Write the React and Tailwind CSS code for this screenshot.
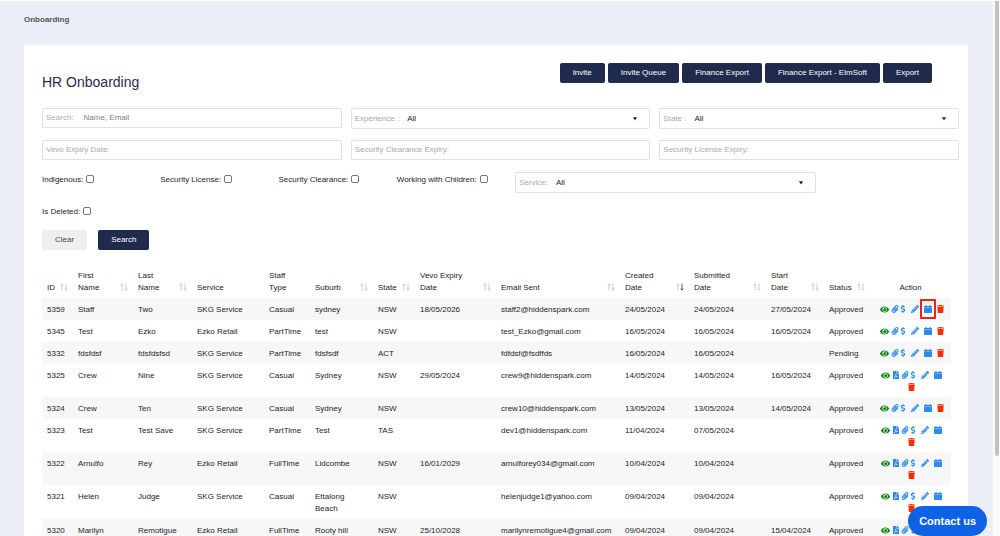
import { Fragment } from "react";
import {
	FaDollarSign,
	FaEye,
	FaFilePdf,
	FaPaperclip,
	FaPencilAlt,
} from "react-icons/fa";

const columns = [
	{ label: ["ID"], width: "w-[31px]", sort: true },
	{ label: ["First", "Name"], width: "w-[60px]", sort: true },
	{ label: ["Last", "Name"], width: "w-[59px]", sort: true },
	{ label: ["Service"], width: "w-[72px]" },
	{ label: ["Staff", "Type"], width: "w-[46px]" },
	{ label: ["Suburb"], width: "w-[63px]", sort: true },
	{ label: ["State"], width: "w-[42px]", sort: true },
	{ label: ["Vevo Expiry", "Date"], width: "w-[81px]", sort: true },
	{ label: ["Email Sent"], width: "w-[124px]", sort: true },
	{ label: ["Created", "Date"], width: "w-[69px]", sort: true, desc: true },
	{ label: ["Submitted", "Date"], width: "w-[77px]", sort: true },
	{ label: ["Start", "Date"], width: "w-[58px]", sort: true },
	{ label: ["Status"], width: "w-[46px]", sort: true },
	{ label: ["Action"], width: "w-[81px]", center: true },
];

const rows = [
	{ cells: ["5359", "Staff", "Two", "SKG Service", "Casual", "sydney", "NSW", "18/05/2026", "staff2@hiddenspark.com", "24/05/2024", "24/05/2024", "27/05/2024", "Approved"], marked: true },
	{ cells: ["5345", "Test", "Ezko", "Ezko Retail", "PartTime", "test", "NSW", "", "test_Ezko@gmail.com", "16/05/2024", "16/05/2024", "16/05/2024", "Approved"] },
	{ cells: ["5332", "fdsfdsf", "fdsfdsfsd", "SKG Service", "PartTime", "fdsfsdf", "ACT", "", "fdfdsf@fsdffds", "16/05/2024", "16/05/2024", "", "Pending"] },
	{ cells: ["5325", "Crew", "Nine", "SKG Service", "Casual", "Sydney", "NSW", "29/05/2024", "crew9@hiddenspark.com", "14/05/2024", "14/05/2024", "16/05/2024", "Approved"], pdf: true },
	{ cells: ["5324", "Crew", "Ten", "SKG Service", "Casual", "Sydney", "NSW", "", "crew10@hiddenspark.com", "13/05/2024", "13/05/2024", "14/05/2024", "Approved"] },
	{ cells: ["5323", "Test", "Test Save", "SKG Service", "PartTime", "Test", "TAS", "", "dev1@hiddenspark.com", "11/04/2024", "07/05/2024", "", "Approved"], pdf: true },
	{ cells: ["5322", "Arnulfo", "Rey", "Ezko Retail", "FullTime", "Lidcombe", "NSW", "16/01/2029", "arnulforey034@gmail.com", "10/04/2024", "10/04/2024", "", "Approved"], pdf: true },
	{ cells: ["5321", "Helen", "Judge", "SKG Service", "Casual", "Ettalong Beach", "NSW", "", "helenjudge1@yahoo.com", "09/04/2024", "09/04/2024", "", "Approved"], pdf: true },
	{ cells: ["5320", "Marilyn", "Remotigue", "Ezko Retail", "FullTime", "Rooty hill", "NSW", "25/10/2028", "marilynremotigue4@gmail.com", "09/04/2024", "09/04/2024", "15/04/2024", "Approved"], pdf: true },
];

function PrimaryButton({ children }) {
	return (
		<button type="button" className="h-5 rounded-xs bg-[#1f2a4d] px-[13px] font-medium text-white">
			{children}
		</button>
	);
}

function TextField({ id, label, placeholder }) {
	return (
		<div className="flex h-5 items-center rounded-xs border border-[#dfe1e6] px-[3px]">
			<label htmlFor={id} className="shrink-0 text-[#a9a9ad]">{label}</label>
			<input id={id} type="text" placeholder={placeholder} className="ml-[10px] min-w-0 flex-1 outline-none placeholder:text-[#808085]" />
		</div>
	);
}

function SelectField({ id, label }) {
	return (
		<div className="flex h-[21px] items-center rounded-xs border border-[#dfe1e6] pr-3 pl-[3px]">
			<label htmlFor={id} className="shrink-0 text-[#a9a9ad]">{label}</label>
			<select id={id} className="ml-2 min-w-0 flex-1 appearance-none bg-transparent outline-none">
				<option>All</option>
			</select>
			<svg viewBox="0 0 4 4" className="size-1 shrink-0" aria-hidden="true">
				<path d="M0 0.3h4L2 3.6z" fill="#222" />
			</svg>
		</div>
	);
}

function CheckField({ id, label }) {
	return (
		<div className="flex h-[15px] items-center gap-[3px]">
			<label htmlFor={id}>{label}</label>
			<input id={id} type="checkbox" className="mb-[2px] size-2 appearance-none rounded-[2px] border border-[#767676] bg-white checked:bg-[#1f2a4d]" />
		</div>
	);
}

function SortArrows({ desc }) {
	return (
		<svg viewBox="0 0 8 8" className="mb-[3px] size-2 shrink-0" fill="none" strokeWidth="0.8" aria-hidden="true">
			<path d="M2 7.5V1M0.7 2.4L2 0.8l1.3 1.6" stroke="#bfbfbf" />
			<path d="M6 0.5V7M4.7 5.6L6 7.2l1.3-1.6" stroke={desc ? "#333" : "#bfbfbf"} />
		</svg>
	);
}

function CalendarIcon() {
	return (
		<svg viewBox="0 0 8 8" className="size-2" fill="currentColor" aria-hidden="true">
			<path d="M1.4 0h1.2v1h2.8V0h1.2v1H8v6.3q0 .7-.7.7H.7Q0 8 0 7.3V1h1.4z" />
			<path d="M0 2.4h8v.6H0z" fill="#fff" fillOpacity="0.5" />
		</svg>
	);
}

function TrashIcon() {
	return (
		<svg viewBox="0 0 7 8" className="h-2 w-[7px]" fill="currentColor" aria-hidden="true">
			<path d="M2.3 0h2.4l.3.5h2v1.1H0V.5h2z" />
			<path d="M.4 2h6.2l-.4 5.4q-.1.6-.7.6h-4q-.6 0-.7-.6z" />
		</svg>
	);
}

function Action({ label, className, children }) {
	return (
		<button type="button" aria-label={label} className={className}>
			{children}
		</button>
	);
}

function Actions({ pdf, marked }) {
	const trash = (
		<Action label="Delete" className="text-[#fb2c08]"><TrashIcon /></Action>
	);

	return (
		<div className="text-[#2b8ceb]">
			<div className="flex h-3 items-center justify-center pl-[2px]">
				<Action label="View" className="mr-[2px] text-[#078207]"><FaEye className="size-[9px]" /></Action>
				{pdf && <Action label="PDF" className="mr-px"><FaFilePdf className="size-2" /></Action>}
				<Action label="Attachments"><FaPaperclip className="size-2" /></Action>
				<Action label="Payment" className="mr-1"><FaDollarSign className="size-2" /></Action>
				<Action label="Edit" className="mr-[5px]"><FaPencilAlt className="size-2" /></Action>
				<div className="relative flex">
					<Action label="Calendar"><CalendarIcon /></Action>
					{marked && <span className="pointer-events-none absolute -inset-x-1 -inset-y-[6px] border-2 border-[#f5230c]" />}
				</div>
				{!pdf && <div className="ml-[5px] flex">{trash}</div>}
			</div>
			{pdf && <div className="flex h-[11px] items-center justify-center pl-[2px]">{trash}</div>}
		</div>
	);
}

function App() {
	return (
		<div className="flex h-screen overflow-hidden border-t border-white bg-[#ebeef6] font-['Liberation_Sans',Arial,sans-serif] text-[8px] leading-3 text-[#212529]">
			<main className="min-w-0 flex-1 pr-[25px] pl-6">
				<nav className="pt-[13px] pb-[19px] font-bold text-[#555]">Onboarding</nav>
				<section className="bg-white pt-[18px] pr-[9px] pl-[18px]">
					<header className="flex items-start justify-between pr-[27px]">
						<h1 className="pt-[9px] text-[14px] leading-5 text-[#1f2a4d]">HR Onboarding</h1>
						<div className="flex gap-[3px]">
							<PrimaryButton>Invite</PrimaryButton>
							<PrimaryButton>Invite Queue</PrimaryButton>
							<PrimaryButton>Finance Export</PrimaryButton>
							<PrimaryButton>Finance Export - ElmSoft</PrimaryButton>
							<PrimaryButton>Export</PrimaryButton>
						</div>
					</header>
					<form>
						<div className="mt-4 grid grid-cols-3 gap-x-[9px] gap-y-[11px]">
							<TextField id="search" label="Search:" placeholder="Name, Email" />
							<SelectField id="experience" label="Experience :" />
							<SelectField id="state" label="State :" />
							<TextField id="vevo" label="Vevo Expiry Date:" />
							<TextField id="clearance-expiry" label="Security Clearance Expiry:" />
							<TextField id="license-expiry" label="Security License Expiry:" />
						</div>
						<div className="mt-3 grid grid-cols-[repeat(4,minmax(0,118fr))_300fr_143fr]">
							<CheckField id="indigenous" label="Indigenous:" />
							<CheckField id="license" label="Security License:" />
							<CheckField id="clearance" label="Security Clearance:" />
							<CheckField id="children" label="Working with Children:" />
							<SelectField id="service" label="Service:" />
						</div>
						<div className="mt-[11px]">
							<CheckField id="deleted" label="Is Deleted:" />
						</div>
						<div className="mt-[11px] flex gap-[11px]">
							<button type="reset" className="h-5 rounded-xs bg-[#efefef] px-[13px] text-[#444]">Clear</button>
							<PrimaryButton>Search</PrimaryButton>
						</div>
					</form>
					<div className="mt-4 pr-2">
						<table className="w-full table-fixed border-collapse text-left">
							<thead>
								<tr>
									{columns.map((col) => (
										<th key={col.label.join(" ")} className={`${col.width} px-[5px] pt-1 pb-1 align-bottom font-normal`}>
											<div className={`flex items-end ${col.center ? "justify-center" : "justify-between"}`}>
												<span className="whitespace-nowrap">
													{col.label.map((line, i) => (
														<Fragment key={line}>
															{i > 0 && <br />}
															{line}
														</Fragment>
													))}
												</span>
												{col.sort && <SortArrows desc={col.desc} />}
											</div>
										</th>
									))}
								</tr>
							</thead>
							<tbody>
								{rows.map((row) => (
									<tr key={row.cells[0]} className="align-top odd:bg-[#f7f7f7]">
										{row.cells.map((cell, i) => (
											<td key={i} className="px-[5px] pt-[6px] pb-1">{cell}</td>
										))}
										<td className="py-[5px]">
											<Actions pdf={row.pdf} marked={row.marked} />
										</td>
									</tr>
								))}
							</tbody>
						</table>
					</div>
				</section>
			</main>
			<div className="w-[7px] shrink-0 bg-[#fafafa] pl-[2px]">
				<div className="h-[85%] w-1 rounded-b-xs bg-[#c1c1c1]" />
			</div>
			<button type="button" className="fixed right-[13px] bottom-0 h-[30px] rounded-full bg-[#0f62e6] px-[11px] text-[11px] font-bold text-white">
				Contact us
			</button>
		</div>
	);
}

export default App;
